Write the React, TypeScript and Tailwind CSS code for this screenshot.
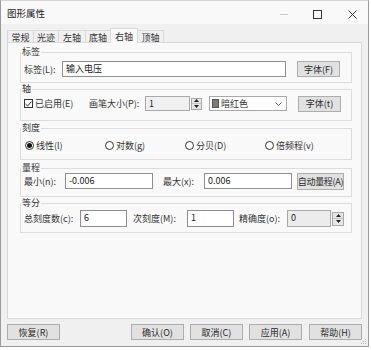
import React from "react";

function Btn({ className, children }: { className: string; children: React.ReactNode }) {
  return (
    <div
      className={`flex h-[16px] items-center justify-center whitespace-nowrap border border-[#adadad] bg-[#e1e1e1] text-[9px] leading-none text-[#2a2a2a] ${className}`}
    >
      {children}
    </div>
  );
}

function Input({ className, children }: { className: string; children?: React.ReactNode }) {
  return (
    <div className={`border border-[#8f8f8f] px-[3px] pt-[1px] text-[9px] leading-[12px] text-[#222] ${className}`}>
      {children}
    </div>
  );
}

function SpinArrows({ className }: { className: string }) {
  return (
    <div className={`flex flex-col border border-[#a8a8a8] bg-[#e6e6e6] ${className}`}>
      <div className="flex flex-1 items-center justify-center border-b border-[#c4c4c4]">
        <svg width="5" height="3" viewBox="0 0 5 3">
          <path d="M0 3 L2.5 0 L5 3 Z" fill="#222" />
        </svg>
      </div>
      <div className="flex flex-1 items-center justify-center">
        <svg width="5" height="3" viewBox="0 0 5 3">
          <path d="M0 0 L2.5 3 L5 0 Z" fill="#222" />
        </svg>
      </div>
    </div>
  );
}

function Group({ title, className, children }: { title: string; className: string; children: React.ReactNode }) {
  return (
    <fieldset className={`ml-[12px] w-[332px] border border-[#dcdcdc] px-0 ${className}`}>
      <legend className="px-[1px] text-[9px] leading-[10px] text-[#333]">{title}</legend>
      {children}
    </fieldset>
  );
}

function Radio({ label, checked }: { label: string; checked?: boolean }) {
  return (
    <div className="flex w-[80px] items-center">
      <div className="flex h-[9px] w-[9px] items-center justify-center rounded-full border border-[#333] bg-white">
        {checked && <div className="h-[5px] w-[5px] rounded-full bg-[#111]" />}
      </div>
      <span className="ml-[2px] text-[9px] leading-none">{label}</span>
    </div>
  );
}

const tabs = [
  { t: "常规", w: "w-[27px]" },
  { t: "光迹", w: "w-[26px]" },
  { t: "左轴", w: "w-[28px]" },
  { t: "底轴", w: "w-[26px]" },
  { t: "右轴", w: "w-[28px]", active: true },
  { t: "顶轴", w: "w-[27px]" },
];

export default function App() {
  return (
    <div className="h-[350px] w-[371px] bg-white font-['Noto_Sans_CJK_SC','Noto_Sans',sans-serif] text-[#333]">
      <div className="relative flex h-[347px] w-[369px] flex-col border-x border-b border-t border-x-[#9a9a9a] border-b-[#9a9a9a] border-t-[#d4d4d4] bg-[#f0f0f0]">
        {/* title bar */}
        <div className="flex h-[23px] items-center bg-[#f9f9f9]">
          <span className="pl-[6px] pt-[3px] text-[9.5px] leading-none text-[#222]">图形属性</span>
          <div className="ml-auto flex items-center pr-[11px] pt-[3px]">
            <div className="h-px w-[8px] bg-[#c8c8c8]" />
            <svg className="ml-[25px]" width="9" height="9" viewBox="0 0 9 9">
              <rect x="0.5" y="0.5" width="8" height="8" fill="none" stroke="#333" strokeWidth="1" />
            </svg>
            <svg className="ml-[26px]" width="9" height="9" viewBox="0 0 9 9">
              <path d="M0.5 0.5 L8.5 8.5 M8.5 0.5 L0.5 8.5" stroke="#333" strokeWidth="1" />
            </svg>
          </div>
        </div>

        {/* tabs */}
        <div className="relative z-10 flex h-[19px] items-end pl-[6px]">
          {tabs.map((tb, i) =>
            tb.active ? (
              <div
                key={tb.t}
                className={`${tb.w} ${i > 0 ? "-ml-px" : ""} flex h-[15px] items-center justify-center border-x border-t border-[#d9d9d9] bg-[#f9f9f9] text-[9px] leading-none text-[#333]`}
              >
                {tb.t}
              </div>
            ) : (
              <div
                key={tb.t}
                className={`${tb.w} ${i > 0 ? "-ml-px" : ""} mb-[1px] flex h-[12px] items-center justify-center border-x border-t border-[#d9d9d9] bg-[#f0f0f0] pt-[1px] text-[9px] leading-none text-[#333]`}
              >
                {tb.t}
              </div>
            )
          )}
        </div>

        {/* panel */}
        <div className="-mt-px ml-[6px] flex h-[277px] w-[355px] flex-col border border-[#d9d9d9] bg-[#f9f9f9]">
          {/* 标签 */}
          <Group title="标签" className="mt-[4px] pb-[5px] pt-[4px]">
            <div className="ml-[3px] flex h-[16px] items-center">
              <span className="w-[38px] text-[9px] leading-none">标签(L):</span>
              <Input className="h-[16px] w-[224px] bg-white">输入电压</Input>
              <Btn className="ml-[11px] h-[15px] w-[43px]">字体(F)</Btn>
            </div>
          </Group>

          {/* 轴 */}
          <Group title="轴" className="mt-[1px] pb-[9px] pt-[2px]">
            <div className="ml-[3px] flex h-[15px] items-center">
              <div className="flex w-[65px] items-center">
                <div className="flex h-[9px] w-[9px] items-center justify-center border border-[#333] bg-white">
                  <svg width="7" height="6" viewBox="0 0 7 6">
                    <path d="M0.5 3 L2.6 5 L6.5 0.6" fill="none" stroke="#222" strokeWidth="1" />
                  </svg>
                </div>
                <span className="ml-[2px] text-[9px] leading-none">已启用(E)</span>
              </div>
              <span className="w-[56px] text-[9px] leading-none">画笔大小(P):</span>
              <Input className="h-[15px] w-[45px] border-[#a8a8a8] bg-[#f0f0f0]">1</Input>
              <SpinArrows className="ml-[1px] h-[12px] w-[11px]" />
              <div className="ml-[7px] flex h-[15px] w-[78px] items-center border border-[#a8a8a8] bg-white pl-[2px]">
                <div className="h-[9px] w-[7px] border border-[#555] bg-[#7b7b7b]" />
                <span className="ml-[2px] text-[9px] leading-none">暗红色</span>
                <svg className="ml-auto mr-[4px]" width="7" height="4" viewBox="0 0 7 4">
                  <path d="M0.5 0.5 L3.5 3.5 L6.5 0.5" fill="none" stroke="#666" strokeWidth="1" />
                </svg>
              </div>
              <Btn className="ml-[11px] h-[15px] w-[43px]">字体(t)</Btn>
            </div>
          </Group>

          {/* 刻度 */}
          <Group title="刻度" className="mt-[2px] pb-[8px] pt-[6px]">
            <div className="ml-[4px] flex h-[12px] items-center">
              <Radio label="线性(l)" checked />
              <Radio label="对数(g)" />
              <Radio label="分贝(D)" />
              <Radio label="倍频程(v)" />
            </div>
          </Group>

          {/* 量程 */}
          <Group title="量程" className="mt-[3px] pb-[7px] pt-0">
            <div className="ml-[3px] flex h-[16px] items-center">
              <span className="w-[41px] text-[9px] leading-none">最小(n):</span>
              <Input className="h-[16px] w-[88px] bg-white">-0.006</Input>
              <span className="ml-[10px] w-[41px] text-[9px] leading-none">最大(x):</span>
              <Input className="h-[16px] w-[88px] bg-white">0.006</Input>
              <Btn className="ml-[5px] h-[17px] w-[47px] border-[#4a4a4a] text-[8.5px] tracking-[-0.3px]">自动量程(A)</Btn>
            </div>
          </Group>

          {/* 等分 */}
          <Group title="等分" className="mt-[1px] pb-[5px] pt-[2px]">
            <div className="ml-[3px] flex h-[17px] items-center">
              <span className="w-[56px] text-[9px] leading-none">总刻度数(c):</span>
              <Input className="h-[17px] w-[47px] bg-white">6</Input>
              <span className="ml-[6px] w-[54px] text-[9px] leading-none">次刻度(M):</span>
              <Input className="h-[17px] w-[47px] bg-white">1</Input>
              <span className="ml-[5px] w-[48px] text-[9px] leading-none">精确度(o):</span>
              <Input className="h-[17px] w-[44px] border-[#a8a8a8] bg-[#ececec]">0</Input>
              <SpinArrows className="ml-[1px] h-[14px] w-[12px]" />
            </div>
          </Group>
        </div>

        {/* bottom buttons */}
        <div className="mt-[5px] flex h-[16px] items-center pl-[6px]">
          <Btn className="w-[53px]">恢复(R)</Btn>
          <Btn className="ml-[71px] w-[53px]">确认(O)</Btn>
          <Btn className="ml-[6px] w-[53px]">取消(C)</Btn>
          <Btn className="ml-[6px] w-[53px]">应用(A)</Btn>
          <Btn className="ml-[7px] w-[53px]">帮助(H)</Btn>
        </div>

        {/* resize grip */}
        <svg className="absolute bottom-[1px] right-[1px]" width="7" height="7" viewBox="0 0 7 7">
          <rect x="5" y="1" width="1" height="1" fill="#b0b0b0" />
          <rect x="3" y="3" width="1" height="1" fill="#b0b0b0" />
          <rect x="5" y="3" width="1" height="1" fill="#b0b0b0" />
          <rect x="1" y="5" width="1" height="1" fill="#b0b0b0" />
          <rect x="3" y="5" width="1" height="1" fill="#b0b0b0" />
          <rect x="5" y="5" width="1" height="1" fill="#b0b0b0" />
        </svg>
      </div>
    </div>
  );
}
